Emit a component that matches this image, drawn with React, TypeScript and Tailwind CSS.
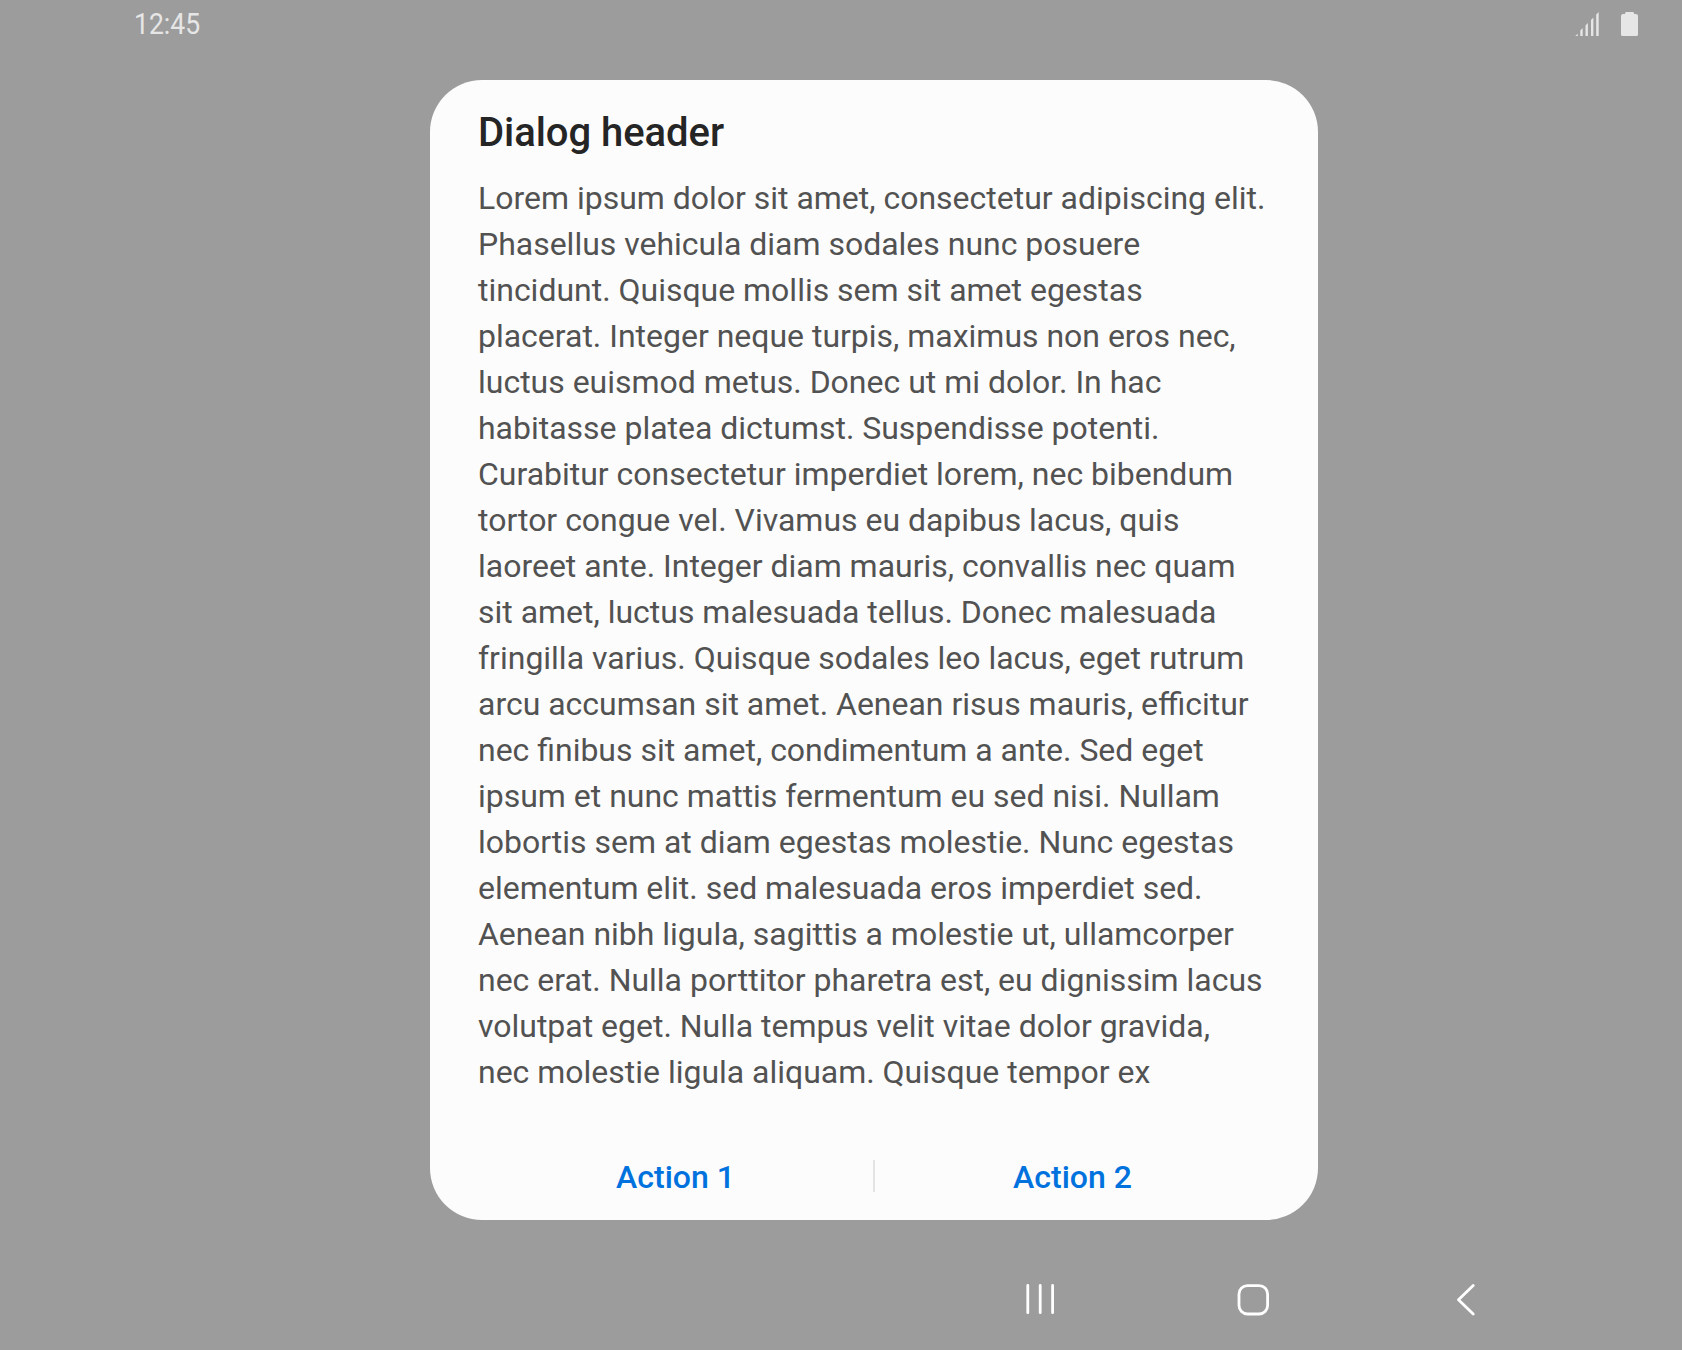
const lines = [
  'Lorem ipsum dolor sit amet, consectetur adipiscing elit.',
  'Phasellus vehicula diam sodales nunc posuere',
  'tincidunt. Quisque mollis sem sit amet egestas',
  'placerat. Integer neque turpis, maximus non eros nec,',
  'luctus euismod metus. Donec ut mi dolor. In hac',
  'habitasse platea dictumst. Suspendisse potenti.',
  'Curabitur consectetur imperdiet lorem, nec bibendum',
  'tortor congue vel. Vivamus eu dapibus lacus, quis',
  'laoreet ante. Integer diam mauris, convallis nec quam',
  'sit amet, luctus malesuada tellus. Donec malesuada',
  'fringilla varius. Quisque sodales leo lacus, eget rutrum',
  'arcu accumsan sit amet. Aenean risus mauris, efficitur',
  'nec finibus sit amet, condimentum a ante. Sed eget',
  'ipsum et nunc mattis fermentum eu sed nisi. Nullam',
  'lobortis sem at diam egestas molestie. Nunc egestas',
  'elementum elit. sed malesuada eros imperdiet sed.',
  'Aenean nibh ligula, sagittis a molestie ut, ullamcorper',
  'nec erat. Nulla porttitor pharetra est, eu dignissim lacus',
  'volutpat eget. Nulla tempus velit vitae dolor gravida,',
  'nec molestie ligula aliquam. Quisque tempor ex',
];

function SignalIcon() {
  return (
    <svg className="h-6 w-6" viewBox="0 0 24 24" fill="currentColor">
      <path d="M0.2 24L2.7 21.8V24ZM5.3 24V18.6L7.7 16.1V24ZM10.5 24V13.4L12.9 11V24ZM16 24V8L18.4 5.6V24ZM21.2 24V2.6L23.7 0V24Z" />
    </svg>
  );
}

function BatteryIcon() {
  return (
    <svg className="h-6 w-[17px]" viewBox="0 0 17 24" fill="currentColor">
      <path d="M5.4 0H11.8Q13.2 0 13.2 2H15Q17 2 17 4V22.5Q17 24 15.5 24H1.5Q0 24 0 22.5V4Q0 2 2 2H3.9Q3.9 0 5.4 0Z" />
    </svg>
  );
}

export default function App() {
  return (
    <div className="flex h-[1350px] w-[1682px] flex-col overflow-hidden bg-[#9c9c9c] font-['Roboto',sans-serif]">
      <header className="flex h-20 items-start justify-between pr-11 pl-[134px] text-[#e6e6e6]">
        <span className="mt-2 origin-left scale-x-[0.885] text-[30px] leading-8">12:45</span>
        <div className="mt-3 flex gap-[22px]">
          <SignalIcon />
          <BatteryIcon />
        </div>
      </header>
      <main className="ml-[430px] flex h-[1140px] w-[888px] flex-col rounded-[52px] bg-[#fcfcfc] px-12 pt-[29px]">
        <h1 className="text-[40px] leading-[48px] font-medium tracking-[-0.05px] text-[#252525]">Dialog header</h1>
        <div className="mt-[18px] text-[31.98px] leading-[46px] whitespace-nowrap text-[#525252]">
          {lines.map((line) => (
            <p key={line}>{line}</p>
          ))}
        </div>
        <div className="mt-[49px] flex h-16 items-center text-[32px] font-medium text-[#0072de]">
          <button className="flex-1 pt-0.5">Action 1</button>
          <div className="h-8 w-0.5 bg-[#e4e4e4]" />
          <button className="flex-1 pt-0.5">Action 2</button>
        </div>
      </main>
      <nav className="mt-16 ml-[1026px] flex text-white">
        <button className="mr-[183px]">
          <svg className="h-8 w-7" viewBox="0 0 28 32" fill="none" stroke="currentColor" strokeWidth="2.8" strokeLinecap="round">
            <path d="M1.8 1.5V28.7M14.2 1.5V28.7M26.6 1.5V28.7" />
          </svg>
        </button>
        <button className="mr-[188px]">
          <svg className="h-8 w-8" viewBox="0 0 32 32" fill="none" stroke="currentColor" strokeWidth="2.8">
            <rect x="2" y="1.6" width="28.6" height="28.4" rx="8.5" />
          </svg>
        </button>
        <button>
          <svg className="h-8 w-5" viewBox="0 0 20 32" fill="none" stroke="currentColor" strokeWidth="2.8" strokeLinecap="round" strokeLinejoin="round">
            <path d="M16.2 1.5L1.5 15.8L16.2 30.1" />
          </svg>
        </button>
      </nav>
    </div>
  );
}
